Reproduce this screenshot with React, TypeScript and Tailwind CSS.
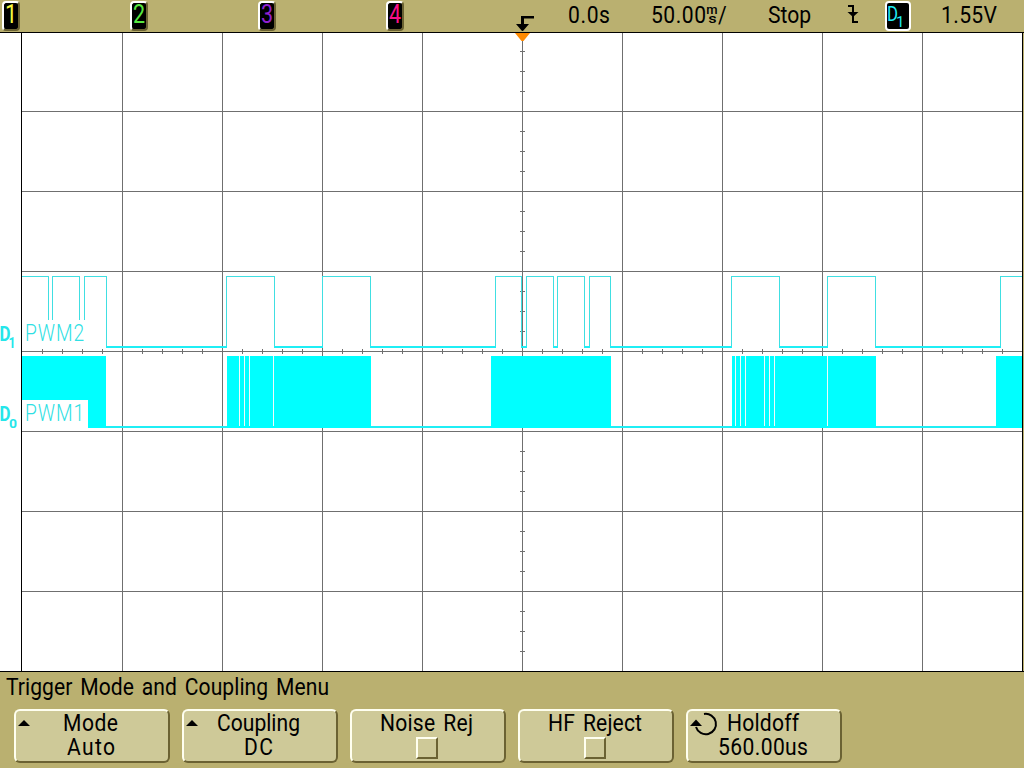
import { useLayoutEffect, useRef, useState, type ReactNode } from "react";

const SCALE = 0.86;

/** Condensed text whose letter spacing is worked out so it fills `width` pixels. */
function Fit({ text, width, className = "" }: { text: string; width: number; className?: string }) {
  const ref = useRef<HTMLSpanElement>(null);
  const [spacing, setSpacing] = useState(0);
  useLayoutEffect(() => {
    if (!ref.current) return;
    ref.current.style.letterSpacing = "0px";
    const natural = ref.current.getBoundingClientRect().width / SCALE;
    const next = (width / SCALE - natural) / Math.max(1, text.length - 1);
    ref.current.style.letterSpacing = `${next}px`;
    setSpacing(next);
  }, [text, width]);
  return (
    <span className={`block h-6 shrink-0 ${className}`} style={{ width }}>
      <span
        ref={ref}
        className="inline-block origin-left scale-x-86 whitespace-pre text-[24.5px] leading-6 [word-spacing:3px]"
        style={{ letterSpacing: spacing }}
      >
        {text}
      </span>
    </span>
  );
}

function ChannelBadge({ label, color }: { label: string; color: string }) {
  return (
    <div className="mr-[110px] h-[30px] w-[18px] shrink-0 rounded-[4px] border-2 border-t-white border-l-white border-r-[#6b6233] border-b-[#6b6233] bg-black">
      <span className={`block origin-center scale-x-86 text-center text-[25px] leading-[24px] ${color}`}>{label}</span>
    </div>
  );
}

function SoftKey({ children, icon }: { children: ReactNode; icon?: ReactNode }) {
  return (
    <div className="relative flex h-[54px] w-[156px] shrink-0 flex-col items-center rounded-[6px] border-2 border-t-[#fffff0] border-l-[#fffff0] border-r-[#6b6233] border-b-[#6b6233] bg-[#cec998] pr-[3px]">
      {icon}
      {children}
    </div>
  );
}

function UpMark() {
  return (
    <svg className="absolute top-[9px] left-[2px]" width="12" height="6" viewBox="0 0 12 6">
      <path d="M6 0 L12 6 H0 Z" />
    </svg>
  );
}

function KnobMark() {
  return (
    <svg className="absolute top-[1px] left-[2px]" width="30" height="26" viewBox="690 712 30 26">
      <path d="M704 714 A10.2 10.2 0 1 1 696 727" fill="none" stroke="black" strokeWidth="2" />
      <path d="M696 719.5 L702 726 H690 Z" />
    </svg>
  );
}

function CheckBox() {
  return (
    <span className="ml-px block size-[22px] border-2 border-t-[#fffff0] border-l-[#fffff0] border-r-[#6b6233] border-b-[#6b6233]" />
  );
}

const PULSES = [
  [226, 274],
  [322, 370],
  [495, 521],
  [526, 553],
  [557, 584],
  [589, 610],
  [731, 779],
  [827, 875],
];
const LOWS = [
  [106, 227], [274, 323], [370, 496], [521, 527], [553, 558], [584, 590], [610, 732], [779, 828], [875, 1001],
];
const BURSTS = [
  [22, 106], [227, 371], [491, 611], [732, 876], [996, 1022],
];
const SLITS = [239, 244, 249, 273, 735, 740, 745, 764, 769, 774, 827];

function ChannelName({ text, y }: { text: string; y: number }) {
  return (
    <g transform={`translate(25 ${y}) scale(0.8 1)`}>
      <text
        textLength="74"
        lengthAdjust="spacing"
        fill="#30dfe4"
        fontFamily="Roboto, sans-serif"
        fontWeight="300"
        fontSize="24"
      >
        {text}
      </text>
    </g>
  );
}

function Display() {
  const verticals = Array.from({ length: 9 }, (_, i) => 122 + i * 100);
  const horizontals = Array.from({ length: 7 }, (_, i) => 111 + i * 80);
  const xTicks = Array.from({ length: 49 }, (_, i) => 42 + i * 20);
  const yTicks = Array.from({ length: 31 }, (_, i) => 51 + i * 20);
  return (
    <svg className="block shrink-0" width="1024" height="640" viewBox="0 32 1024 640">
      <rect x="0" y="32" width="1023" height="640" fill="white" />
      <g shapeRendering="crispEdges">
        <g fill="#6f6f6f">
          {verticals.map((x) => <rect key={x} x={x} y="33" width="1" height="638" />)}
          {horizontals.map((y) => <rect key={y} x="22" y={y} width="1000" height="1" />)}
          {xTicks.map((x) => <rect key={x} x={x} y="349" width="1" height="5" />)}
          {yTicks.map((y) => <rect key={y} x="520" y={y} width="5" height="1" />)}
        </g>
        <g fill="none" stroke="#40dfe2" strokeWidth="1">
          <path d="M22 276.5 H48.5 V320 M52.5 320 V276.5 H79.5 V320 M84.5 320 V276.5 H106.5 V347" />
          {PULSES.map(([a, b]) => (
            <path key={a} d={`M${a + 0.5} 348 V276.5 H${b + 0.5} V348`} />
          ))}
          <path d="M1000.5 348 V276.5 H1022" />
        </g>
        <g fill="#1feef5">
          {LOWS.map(([a, b]) => <rect key={a} x={a} y="346" width={b - a} height="2" />)}
          <rect x="106" y="426" width="890" height="2" />
        </g>
        <g fill="#00ffff">
          {BURSTS.map(([a, b]) => <rect key={a} x={a} y="356" width={b - a} height="72" />)}
        </g>
        <g fill="#f0fbfa">
          {SLITS.map((x) => <rect key={x} x={x} y="356" width="1" height="70" />)}
        </g>
        <rect x="22" y="400" width="66" height="28" fill="white" />
        <rect x="0" y="32" width="1024" height="1" />
        <rect x="0" y="671" width="1024" height="1" />
        <rect x="21" y="32" width="1" height="640" />
        <rect x="1022" y="32" width="1" height="640" />
      </g>
      <path d="M515 33 H530 L523.5 41 H521.5 Z" fill="#ff8a00" />
      <ChannelName text="PWM2" y={341} />
      <ChannelName text="PWM1" y={421} />
      <g fill="#25e6ea" fontFamily="Roboto, sans-serif" fontWeight="700">
        <text x="-0.5" y="341" fontSize="21" textLength="11" lengthAdjust="spacingAndGlyphs">D</text>
        <text x="8.5" y="347.5" fontSize="14" textLength="7" lengthAdjust="spacingAndGlyphs">1</text>
        <text x="-0.5" y="421" fontSize="21" textLength="11" lengthAdjust="spacingAndGlyphs">D</text>
        <text x="9" y="427.5" fontSize="13" textLength="8" lengthAdjust="spacingAndGlyphs">0</text>
      </g>
    </svg>
  );
}

export default function App() {
  return (
    <div className="flex h-[768px] w-[1024px] flex-col overflow-hidden bg-[#bab070] font-['Roboto',sans-serif] text-black">
      <header className="flex h-8 shrink-0 items-start pt-px pl-[2px]">
        <ChannelBadge label="1" color="text-[#f8f840]" />
        <ChannelBadge label="2" color="text-[#58e840]" />
        <ChannelBadge label="3" color="text-[#9020d0]" />
        <ChannelBadge label="4" color="text-[#f81088]" />
        <svg className="mt-[14px] ml-[2px] shrink-0" width="20" height="17" viewBox="516 15 20 17">
          <path d="M534 16 V18.5 H524 V24 H529 L523 31 H522 L516 24 H521 V16 Z" />
        </svg>
        <Fit text="0.0s" width={42} className="mt-[2px] ml-[32px]" />
        <Fit text="50.00" width={55} className="mt-[2px] ml-[41px]" />
        <span className="mt-[4px] flex w-[12px] shrink-0 flex-col items-center text-[13px] font-medium">
          <span className="h-[9px] leading-[9px]">m</span>
          <span className="h-[9px] scale-x-125 leading-[9px]">s</span>
        </span>
        <Fit text="/" width={12} className="mt-[2px]" />
        <Fit text="Stop" width={43} className="mt-[2px] ml-[38px]" />
        <svg className="mt-[4px] ml-[36px] shrink-0" width="12" height="18" viewBox="847 5 12 18">
          <path d="M848 6 H853 V22 H858" fill="none" stroke="black" strokeWidth="2" />
          <path d="M847.5 12 H858.5 L853 17 Z" />
        </svg>
        <div className="ml-[26px] flex h-[30px] w-[26px] shrink-0 items-start rounded-[4px] border-2 border-white bg-black text-[#20eef5]">
          <span className="mt-px block w-[9px] origin-left scale-x-80 text-[21px] leading-5">D</span>
          <span className="mt-[13px] block text-[15px] leading-3">1</span>
        </div>
        <Fit text="1.55V" width={56} className="mt-[2px] ml-[30px]" />
      </header>

      <Display />

      <footer className="flex grow flex-col">
        <Fit text="Trigger Mode and Coupling Menu" width={323} className="mt-[3px] ml-[6px]" />
        <div className="mt-[10px] ml-[14px] flex gap-3">
          <SoftKey icon={<UpMark />}>
            <Fit text="Mode" width={55} />
            <Fit text="Auto" width={48} />
          </SoftKey>
          <SoftKey icon={<UpMark />}>
            <Fit text="Coupling" width={83} />
            <Fit text="DC" width={29} />
          </SoftKey>
          <SoftKey>
            <Fit text="Noise Rej" width={93} className="mb-[2px]" />
            <CheckBox />
          </SoftKey>
          <SoftKey>
            <Fit text="HF Reject" width={94} className="mb-[2px]" />
            <CheckBox />
          </SoftKey>
          <SoftKey icon={<KnobMark />}>
            <Fit text="Holdoff" width={72} />
            <Fit text="560.00us" width={90} />
          </SoftKey>
        </div>
      </footer>
    </div>
  );
}
